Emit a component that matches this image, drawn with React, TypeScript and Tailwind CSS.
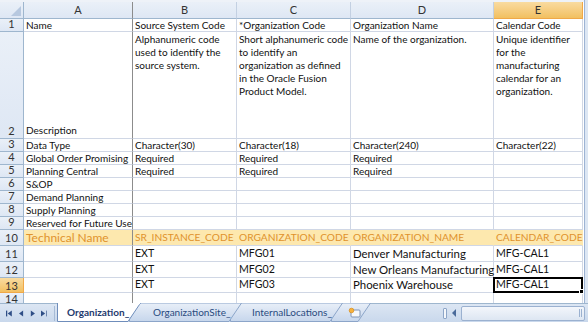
import React from "react";

const COLW = ["w-[109px]", "w-[104px]", "w-[114px]", "w-[143px]", "w-[89px]"];
const LETTERS = ["A", "B", "C", "D", "E"];

type Row = {
  n: number;
  h: string;
  cells: React.ReactNode[];
  kind?: "small" | "wrap" | "tech" | "big";
};

const rows: Row[] = [
  {
    n: 1,
    h: "h-[13px]",
    cells: ["Name", "Source System Code", "*Organization Code", "Organization Name", "Calendar Code"],
  },
  {
    n: 2,
    h: "h-[107px]",
    kind: "wrap",
    cells: [
      "Description",
      <>Alphanumeric code<br />used to identify the<br />source system.</>,
      <>Short alphanumeric code<br />to identify an<br />organization as defined<br />in the Oracle Fusion<br />Product Model.</>,
      <>Name of the organization.</>,
      <>Unique identifier<br />for the<br />manufacturing<br />calendar for an<br />organization.</>,
    ],
  },
  { n: 3, h: "h-[13px]", cells: ["Data Type", "Character(30)", "Character(18)", "Character(240)", "Character(22)"] },
  { n: 4, h: "h-[13px]", cells: ["Global Order Promising", "Required", "Required", "Required", ""] },
  { n: 5, h: "h-[13px]", cells: ["Planning Central", "Required", "Required", "Required", ""] },
  { n: 6, h: "h-[13px]", cells: ["S&OP", "", "", "", ""] },
  { n: 7, h: "h-[13px]", cells: ["Demand Planning", "", "", "", ""] },
  { n: 8, h: "h-[13px]", cells: ["Supply Planning", "", "", "", ""] },
  { n: 9, h: "h-[13px]", cells: ["Reserved for Future Use", "", "", "", ""] },
  {
    n: 10,
    h: "h-[16px]",
    kind: "tech",
    cells: ["Technical Name", "SR_INSTANCE_CODE", "ORGANIZATION_CODE", "ORGANIZATION_NAME", "CALENDAR_CODE"],
  },
  { n: 11, h: "h-[16px]", kind: "big", cells: ["", "EXT", "MFG01", "Denver Manufacturing", "MFG-CAL1"] },
  { n: 12, h: "h-[16px]", kind: "big", cells: ["", "EXT", "MFG02", "New Orleans Manufacturing", "MFG-CAL1"] },
  { n: 13, h: "h-[15px]", kind: "big", cells: ["", "EXT", "MFG03", "Phoenix Warehouse", "MFG-CAL1"] },
];

function RowHead({ n, selected, wrap }: { n: number; selected?: boolean; wrap?: boolean }) {
  return (
    <div
      className={
        "flex w-[24px] shrink-0 justify-center border-r border-b text-[11px] leading-[13px] " +
        (wrap ? "items-end pb-[1px] " : "items-center ") +
        (selected
          ? "bg-gradient-to-b from-[#F9DBA0] to-[#F2C060] border-[#F0A848] text-[#333]"
          : "bg-gradient-to-b from-[#EAF0F8] to-[#DEE7F4] border-[#9EB6CE] text-[#333]")
      }
    >
      {n}
    </div>
  );
}

function Cell({ row, i, c }: { row: Row; i: number; c: React.ReactNode }) {
  const kind = row.kind ?? "small";
  const freeze = i === 0;
  let cls = "shrink-0 overflow-visible whitespace-nowrap border-b border-r pl-[2px] ";
  cls += COLW[i] + " ";
  if (kind === "tech") {
    cls += "flex items-center bg-[#FDE8AE] text-[#E0922C] ";
    cls += i === 0 ? "text-[12px] " : "text-[10.2px] ";
    cls += freeze ? "border-r-[#8C8C8C] border-b-[#D0D7E5] " : "border-r-[#FDE8AE] border-b-[#D0D7E5] ";
  } else {
    cls += freeze ? "border-r-[#8C8C8C] border-b-[#D0D7E5] " : "border-[#D0D7E5] ";
    if (kind === "big") cls += "flex items-center text-[#111] " + (i === 3 ? "text-[11.4px] " : "text-[10.6px] ");
    else if (kind === "wrap")
      cls += i === 0 ? "flex items-end text-[10px] leading-[13px] pb-[1px] text-[#111] " : "pt-[1px] text-[10px] leading-[13px] text-[#111] ";
    else cls += "flex items-end text-[10px] leading-[12px] text-[#111] ";
  }
  const sel = row.n === 13 && i === 4;
  return (
    <div className={cls + (sel ? "relative" : "")}>
      {kind === "wrap" && i > 0 ? <div>{c}</div> : <span>{c}</span>}
      {sel && (
        <div className="absolute left-[-1px] top-[-1px] h-[16px] w-[90px] border-2 border-black">
          <div className="absolute bottom-[-3px] right-[-3px] h-[5px] w-[5px] border border-white bg-black" />
        </div>
      )}
    </div>
  );
}

function NavIcons() {
  const c = "#2F4E86";
  return (
    <div className="flex w-[55px] shrink-0 items-center gap-[6px] pl-[6px]">
      <svg width="8" height="7" viewBox="0 0 8 7">
        <rect x="0" y="0" width="1.5" height="7" fill={c} />
        <polygon points="7,0 2,3.5 7,7" fill={c} />
      </svg>
      <svg width="6" height="7" viewBox="0 0 6 7">
        <polygon points="5,0 0,3.5 5,7" fill={c} />
      </svg>
      <svg width="6" height="7" viewBox="0 0 6 7">
        <polygon points="1,0 6,3.5 1,7" fill={c} />
      </svg>
      <svg width="8" height="7" viewBox="0 0 8 7">
        <polygon points="0,0 5,3.5 0,7" fill={c} />
        <rect x="6.5" y="0" width="1.5" height="7" fill={c} />
      </svg>
      <div className="ml-[1px] h-[15px] w-[1px] bg-[#A7BBD6]" />
    </div>
  );
}

function TabShape({ w, active }: { w: number; active?: boolean }) {
  const h = 19;
  return (
    <svg className="absolute inset-0" width={w} height={h} viewBox={`0 0 ${w} ${h}`}>
      <defs>
        <linearGradient id="tabg" x1="0" y1="0" x2="0" y2="1">
          <stop offset="0" stopColor="#E9EFF8" />
          <stop offset="1" stopColor="#C6D6EC" />
        </linearGradient>
      </defs>
      <polygon
        points={`0.5,0 ${w - 0.5},0 ${w - 13},${h - 0.5} 0.5,${h - 0.5}`}
        fill={active ? "#FFFFFF" : "url(#tabg)"}
        stroke={active ? "#6F8DBB" : "#8CA5C9"}
        strokeWidth="1"
      />
      {active && <line x1="1" y1="0.5" x2={w - 1} y2="0.5" stroke="#FFFFFF" strokeWidth="1.5" />}
    </svg>
  );
}

export default function App() {
  return (
    <div
      className="relative h-[322px] w-[588px] overflow-hidden bg-white"
      style={{ fontFamily: "Lato, 'Liberation Sans', sans-serif" }}
    >
      <div className="flex">
        <div className="w-[584px]">
          <div className="h-[2px] bg-[#EEF2F8]" />
          {/* Column headers */}
          <div className="flex h-[17px]">
            <div className="relative w-[24px] shrink-0 border-r border-b border-[#9EB6CE] bg-gradient-to-b from-[#EAF0F8] to-[#DEE7F4]">
              <svg className="absolute bottom-[2px] right-[2px]" width="10" height="10" viewBox="0 0 10 10">
                <polygon points="10,0 10,10 0,10" fill="#B7C8DF" />
              </svg>
            </div>
            {LETTERS.map((l, i) => (
              <div
                key={l}
                className={
                  "flex shrink-0 items-center justify-center border-b border-r text-[11px] " +
                  COLW[i] +
                  " " +
                  (i === 4
                    ? "bg-gradient-to-b from-[#F9DBA0] to-[#F2C060] border-b-[#F0A848] border-r-[#F0A848] text-[#333]"
                    : i === 0
                    ? "bg-gradient-to-b from-[#EAF0F8] to-[#DEE7F4] border-b-[#9EB6CE] border-r-[#8C8C8C] text-[#333]"
                    : "bg-gradient-to-b from-[#EAF0F8] to-[#DEE7F4] border-b-[#9EB6CE] border-r-[#C3D0E2] text-[#333]")
                }
              >
                {l}
              </div>
            ))}
          </div>
          {rows.map((r) => (
            <div key={r.n} className={"flex " + r.h}>
              <RowHead n={r.n} selected={r.n === 13} wrap={r.kind === "wrap" || r.kind === undefined} />
              {r.cells.map((c, i) => (
                <Cell key={i} row={r} i={i} c={c} />
              ))}
            </div>
          ))}
          {/* Row 14 partial */}
          <div className="flex h-[10px]">
            <div className="flex w-[24px] shrink-0 items-start justify-center border-r border-[#9EB6CE] bg-gradient-to-b from-[#EAF0F8] to-[#DEE7F4] text-[11px] leading-[12px] text-[#333]">
              14
            </div>
            {COLW.map((w, i) => (
              <div key={i} className={"shrink-0 border-r " + w + (i === 0 ? " border-[#8C8C8C]" : " border-[#D0D7E5]")} />
            ))}
          </div>
        </div>
        <div className="h-[303px] w-[4px] border-l border-[#9DB3D3] bg-[#DCE6F3]" />
      </div>

      {/* Sheet tab bar */}
      <div className="flex h-[19px] border-t border-[#9EB6CE] bg-gradient-to-b from-[#DCE6F3] to-[#C9D8EC]">
        <NavIcons />
        <div className="relative z-30 -mt-[1px] ml-[2px] flex h-[19px] w-[84px] shrink-0 items-center pl-[10px]">
          <TabShape w={84} active />
          <span className="relative whitespace-nowrap text-[10px] font-bold text-[#1E3A6E]">Organization_</span>
        </div>
        <div className="relative z-20 -mt-[1px] -ml-[12px] flex h-[19px] w-[113px] shrink-0 items-center pl-[24px]">
          <TabShape w={113} />
          <span className="relative whitespace-nowrap text-[10px] text-[#2A4B80]">OrganizationSite_</span>
        </div>
        <div className="relative z-10 -mt-[1px] -ml-[12px] flex h-[19px] w-[113px] shrink-0 items-center pl-[22px]">
          <TabShape w={113} />
          <span className="relative whitespace-nowrap text-[10px] text-[#2A4B80]">InternalLocations_</span>
        </div>
        <div className="relative z-0 -mt-[1px] -ml-[12px] flex h-[19px] w-[40px] shrink-0 items-center pl-[17px]">
          <TabShape w={40} />
          <svg className="relative" width="13" height="11" viewBox="0 0 13 11">
            <rect x="3" y="3" width="9" height="7" rx="1" fill="#F4F7FB" stroke="#7E94B5" />
            <circle cx="3.5" cy="3.5" r="2.3" fill="#F7B23B" stroke="#D98A14" strokeWidth="0.7" />
          </svg>
        </div>
        <div className="flex-1" />
        <div className="flex items-center">
          <div className="mr-[4px] h-[11px] w-[4px] rounded-[1px] border border-[#8EA6C8] bg-[#F4F7FB]" />
          <svg width="6" height="8" viewBox="0 0 6 8" className="mr-[4px]">
            <polygon points="5,0 1,4 5,8" fill="#4A6A9A" />
          </svg>
          <div className="flex h-[15px] w-[124px] items-center justify-end rounded-[2px] border border-[#9BB1D0] bg-gradient-to-b from-[#F3F6FB] to-[#DDE6F2] pr-[2px]">
            <div className="h-[8px] w-[3px] border-l border-r border-[#9BB1D0]" />
          </div>
        </div>
        <div className="w-[3px]" />
      </div>
    </div>
  );
}
